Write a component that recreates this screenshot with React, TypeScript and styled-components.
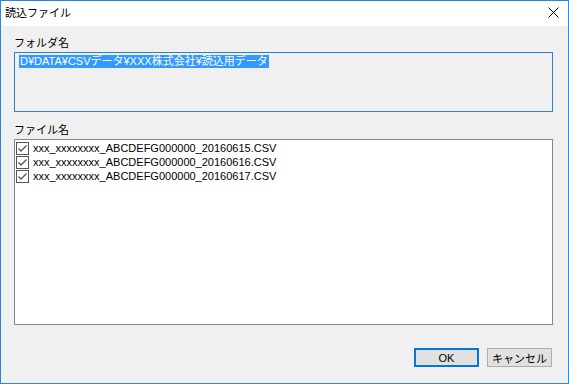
import styled, { createGlobalStyle } from 'styled-components'

const GlobalStyle = createGlobalStyle`
    html, body {
        margin: 0;
        padding: 0;
        background: #f0f0f0;
    }
    * {
        box-sizing: border-box;
    }
`

const Window = styled.div`
    width: 569px;
    height: 384px;
    border: 1px solid #2b87d3;
    background: #f0f0f0;
    display: flex;
    flex-direction: column;
    font-family: "Liberation Sans", "Noto Sans CJK JP", sans-serif;
    font-size: 11px;
    color: #000;
`

const TitleBar = styled.div`
    height: 25px;
    background: #fff;
    display: flex;
    align-items: center;
    justify-content: space-between;
    padding: 0 9px 0 4px;
`

const Title = styled.span`
    font-size: 11px;
    line-height: 14px;
    margin-top: -1px;
`

const CloseButton = styled.div`
    width: 11px;
    height: 11px;
    display: flex;
    margin-top: -2px;
`

const Body = styled.div`
    flex: 1;
    display: flex;
    flex-direction: column;
    padding: 0 15px 0 13px;
`

const Label = styled.div<{ $top: number }>`
    margin-top: ${p => p.$top}px;
    margin-bottom: 2px;
    height: 14px;
    line-height: 14px;
    font-size: 11px;
`

const FolderBox = styled.div`
    height: 60px;
    border: 1px solid #2f7fcb;
    background: #f0f0f0;
    padding: 2px 0 0 4px;
`

const Selected = styled.span`
    background: #3399ff;
    color: #fff;
    line-height: 13px;
    display: inline-block;
    padding: 0 1px;
`

const FileList = styled.div`
    height: 186px;
    border: 1px solid #828790;
    background: #fff;
    padding: 2px 0 0 1px;
    display: flex;
    flex-direction: column;
`

const Row = styled.div`
    height: 14px;
    flex: 0 0 14px;
    display: flex;
    align-items: flex-start;
    gap: 4px;
    overflow: hidden;

    svg {
        flex: 0 0 13px;
        display: block;
    }

    span {
        line-height: 13px;
        margin-top: 0;
    }
`

const Buttons = styled.div`
    margin-top: 23px;
    display: flex;
    justify-content: flex-end;
    gap: 8px;
    padding-right: 1px;
`

const Button = styled.div<{ $primary?: boolean }>`
    width: 65px;
    height: 19px;
    display: flex;
    align-items: center;
    justify-content: center;
    background: #e1e1e1;
    border: ${p => p.$primary ? '2px solid #0078d7' : '1px solid #adadad'};
    font-size: 11px;
`

function Check() {
    return (
        <svg width="13" height="13" viewBox="0 0 13 13">
            <rect x="0.5" y="0.5" width="12" height="12" fill="#fff" stroke="#555" />
            <path d="M2.5 6.5 L5 9 L10.5 3.5" fill="none" stroke="#555" strokeWidth="1.3" />
        </svg>
    )
}

const files = [
    'xxx_xxxxxxxx_ABCDEFG000000_20160615.CSV',
    'xxx_xxxxxxxx_ABCDEFG000000_20160616.CSV',
    'xxx_xxxxxxxx_ABCDEFG000000_20160617.CSV',
]

export default function App() {
    return (
        <>
            <GlobalStyle />
            <Window>
                <TitleBar>
                    <Title>読込ファイル</Title>
                    <CloseButton>
                        <svg width="11" height="11" viewBox="0 0 11 11">
                            <path d="M0.5 0.5 L10.5 10.5 M10.5 0.5 L0.5 10.5" stroke="#000" strokeWidth="1" />
                        </svg>
                    </CloseButton>
                </TitleBar>
                <Body>
                    <Label $top={10}>フォルダ名</Label>
                    <FolderBox>
                        <Selected>D¥DATA¥CSVデータ¥XXX株式会社¥読込用データ</Selected>
                    </FolderBox>
                    <Label $top={11}>ファイル名</Label>
                    <FileList>
                        {files.map(f => (
                            <Row key={f}>
                                <Check />
                                <span>{f}</span>
                            </Row>
                        ))}
                    </FileList>
                    <Buttons>
                        <Button $primary>OK</Button>
                        <Button>キャンセル</Button>
                    </Buttons>
                </Body>
            </Window>
        </>
    )
}
